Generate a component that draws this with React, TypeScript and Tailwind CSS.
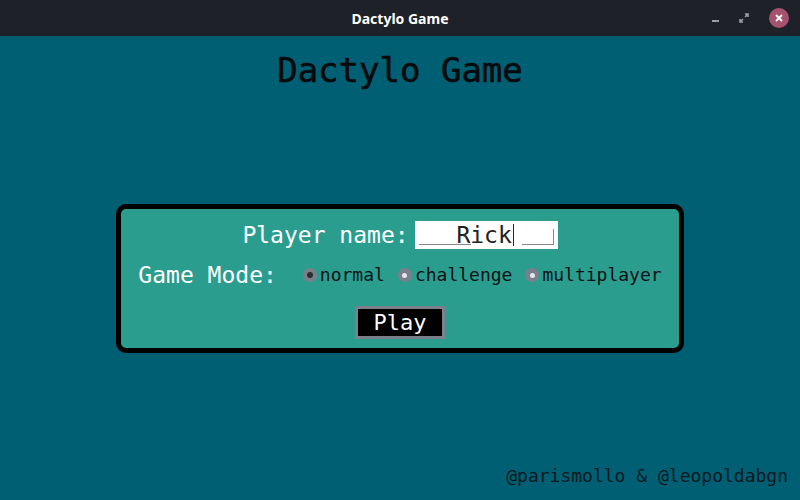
import React from 'react'

const mono = "font-['DejaVu_Sans_Mono','Liberation_Mono',monospace]"

const modes = [
  { label: 'normal', on: true },
  { label: 'challenge', on: false },
  { label: 'multiplayer', on: false },
]

function Radio({ on }: { on: boolean }) {
  return (
    <span className="w-[14px] h-[14px] rounded-full bg-[#7b7f8b] flex items-center justify-center">
      <span className={on ? 'w-[6px] h-[6px] rounded-full bg-[#2b2d33]' : 'w-[5px] h-[5px] rounded-full bg-[#e6e8ee]'} />
    </span>
  )
}

export default function App() {
  return (
    <div className="w-[800px] h-[500px] flex flex-col bg-[#015f73] overflow-hidden">
      <div className="h-[36px] bg-[#1f2128] flex items-center relative">
        <span className="flex-1 text-center text-white text-[14px] font-bold font-['Noto_Sans',sans-serif]">Dactylo Game</span>
        <div className="absolute right-[11px] top-[8px] flex items-center gap-[20px]">
          <span className="w-[7px] h-[2px] bg-[#9a9ca3] mt-[6px]" />
          <svg width="10" height="10" viewBox="0 0 10 10" className="text-[#9a9ca3]">
            <path d="M6 1h3v3M9 1L6 4M4 9H1V6M1 9l3-3" stroke="currentColor" strokeWidth="1.6" fill="none" />
          </svg>
          <span className="w-[20px] h-[20px] rounded-full bg-[#a5526f] flex items-center justify-center">
            <svg width="8" height="8" viewBox="0 0 8 8">
              <path d="M1 1l6 6M7 1L1 7" stroke="white" strokeWidth="1.8" />
            </svg>
          </span>
        </div>
      </div>

      <div className={`flex-1 flex flex-col items-center ${mono}`}>
        <h1 className="pt-[14px] text-[34px] leading-[40px] text-[#050a0c] [-webkit-text-stroke:0.6px_#050a0c]">Dactylo Game</h1>

        <div className="mt-[114px] w-[568px] h-[149px] border-[5px] border-black rounded-[10px] bg-[#2a9d8f] flex flex-col items-center pt-[12px]">
          <div className="flex items-center gap-[6px]">
            <span className="text-white text-[23px] leading-[28px]">Player name:</span>
            <div className="relative w-[143px] h-[28px] bg-white flex items-center justify-center">
              <span className="text-[#222] text-[23px] leading-[28px] ml-[4px]">Rick</span>
              <span className="w-px h-[22px] bg-[#222] ml-[1px] mr-[6px]" />
              <span className="absolute left-[4px] bottom-[4px] w-[52px] h-px bg-[#888]" />
              <span className="absolute right-[4px] bottom-[4px] w-[32px] h-px bg-[#888]" />
              <span className="absolute right-[4px] bottom-[4px] w-px h-[16px] bg-[#888]" />
            </div>
          </div>

          <div className="flex items-center mt-[14px]">
            <span className="text-white text-[23px] leading-[24px] mr-[26px]">Game Mode:</span>
            <div className="flex items-center gap-[13px]">
              {modes.map((m) => (
                <label key={m.label} className="flex items-center gap-[3px]">
                  <Radio on={m.on} />
                  <span className="text-[#0b1214] text-[18px] leading-[24px]">{m.label}</span>
                </label>
              ))}
            </div>
          </div>

          <button className="mt-[19px] w-[90px] h-[33px] border-[3px] border-[#7b7f8b] bg-black text-white text-[22px] leading-[26px]">Play</button>
        </div>

        <div className="mt-auto self-end pr-[12px] pb-[12px] text-[18px] leading-[24px] text-[#071a1f]">@parismollo &amp; @leopoldabgn</div>
      </div>
    </div>
  )
}
